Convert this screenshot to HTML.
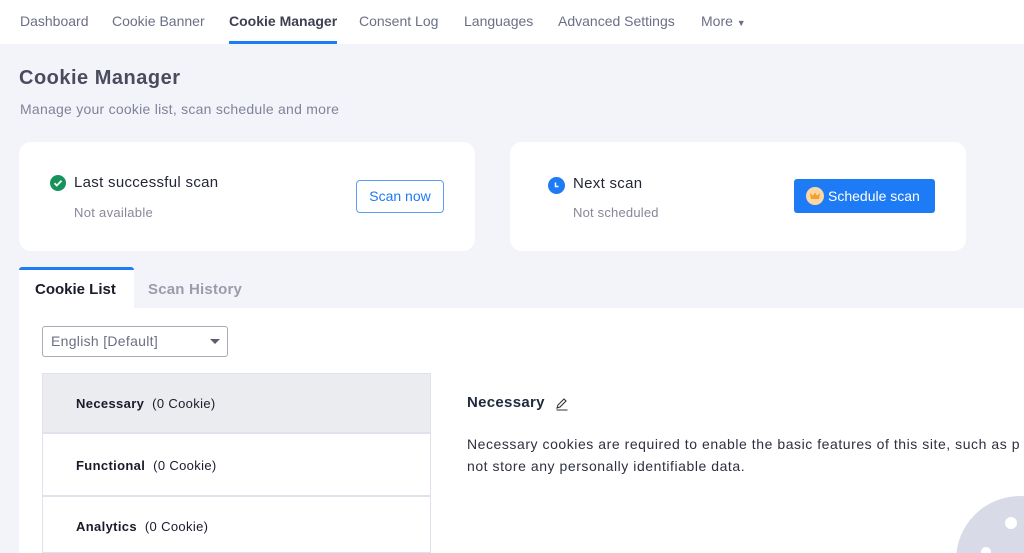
<!DOCTYPE html>
<html><head><meta charset="utf-8"><style>
*{box-sizing:border-box;margin:0;padding:0}
body{width:1024px;height:553px;overflow:hidden;background:#f3f4f9;font-family:"Liberation Sans",sans-serif;position:relative}
.nav{position:absolute;left:0;top:0;width:1024px;height:44px;background:#fff}
.nav span{position:absolute;top:13px;font-size:14px;color:#6b6f86}
.nav .act{color:#3d3f53;font-weight:bold}
.ul{position:absolute;left:229px;top:41px;width:108px;height:3px;background:#1d7bf5}
.a{position:absolute;white-space:nowrap}
.card{position:absolute;top:142px;height:109px;background:#fff;border-radius:12px}
.panel{position:absolute;left:19px;top:308px;width:1005px;height:245px;background:#fff}
</style></head><body>
<div class="nav">
<span style="left:20px">Dashboard</span>
<span style="left:112px">Cookie Banner</span>
<span class="act" style="left:229px">Cookie Manager</span>
<span style="left:359px">Consent Log</span>
<span style="left:464px">Languages</span>
<span style="left:558px">Advanced Settings</span>
<span style="left:701px">More <span style="position:static;font-size:9px">▼</span></span>
<div class="ul"></div>
</div>
<div class="a" style="left:19px;top:67px;font-size:20px;font-weight:bold;color:#4a4b5e;letter-spacing:0.5px">Cookie Manager</div>
<div class="a" style="left:20px;top:101px;font-size:14px;color:#80829a;letter-spacing:0.25px">Manage your cookie list, scan schedule and more</div>

<div class="card" style="left:19px;width:456px"></div>
<svg class="a" style="left:50px;top:175px" width="16" height="16"><circle cx="8" cy="8" r="8" fill="#15935a"/><path d="M4.5 8.2l2.3 2.3 4.7-4.8" stroke="#fff" stroke-width="1.8" fill="none"/></svg>
<div class="a" style="left:74px;top:174px;font-size:15px;color:#24263a;letter-spacing:0.3px">Last successful scan</div>
<div class="a" style="left:74px;top:205px;font-size:13px;color:#868899;letter-spacing:0.3px">Not available</div>
<div class="a" style="left:356px;top:180px;width:88px;height:33px;border:1px solid #5b9cf6;border-radius:4px;color:#1d7bf5;font-size:14px;text-align:center;line-height:31px">Scan now</div>

<div class="card" style="left:510px;width:456px"></div>
<svg class="a" style="left:548px;top:177px" width="17" height="17"><circle cx="8.5" cy="8.5" r="8.5" fill="#1d7bf5"/><path d="M7.5 5.5v4h3" stroke="#fff" stroke-width="1.5" fill="none"/></svg>
<div class="a" style="left:573px;top:175px;font-size:15px;color:#24263a;letter-spacing:0.3px">Next scan</div>
<div class="a" style="left:573px;top:205px;font-size:13px;color:#868899;letter-spacing:0.2px">Not scheduled</div>
<div class="a" style="left:794px;top:179px;width:141px;height:34px;background:#1d7bf5;border-radius:3px;color:#fff;font-size:14px;line-height:34px;padding-left:34px">Schedule scan</div>
<svg class="a" style="left:806px;top:187px" width="18" height="18"><circle cx="9" cy="9" r="9" fill="#fbd7a6"/><path d="M5 12h8l1-6-3 2.5-2-3-2 3-3-2.5z" fill="#f5a02c"/></svg>

<div class="panel"></div>
<div class="a" style="left:19px;top:267px;width:115px;height:42px;background:#fff;border-top:3px solid #1d7bf5;border-radius:3px 3px 0 0"></div>
<div class="a" style="left:35px;top:281px;font-size:15px;font-weight:bold;color:#1a1b2a">Cookie List</div>
<div class="a" style="left:148px;top:281px;font-size:15px;font-weight:bold;color:#9a9cab;letter-spacing:0.2px">Scan History</div>
<div class="a" style="left:42px;top:326px;width:186px;height:31px;border:1px solid #a8abb8;border-radius:3px;font-size:14px;color:#6b6f86;padding:6px 8px;letter-spacing:0.3px">English [Default]</div>
<div class="a" style="left:210px;top:339px;width:0;height:0;border-left:5px solid transparent;border-right:5px solid transparent;border-top:5px solid #5a5d70"></div>

<div class="a" style="left:42px;top:373px;width:389px;height:180px;border:1px solid #dfe2ea;background:#fff"></div>
<div class="a" style="left:43px;top:374px;width:387px;height:60px;background:#ebecef;border-bottom:2px solid #dfe2ea"></div>
<div class="a" style="left:43px;top:495px;width:387px;height:2px;background:#dfe2ea"></div>
<div class="a" style="left:76px;top:396px;font-size:13px;color:#1a1b2a;letter-spacing:0.35px"><b>Necessary</b>&nbsp; (0 Cookie)</div>
<div class="a" style="left:76px;top:458px;font-size:13px;color:#1a1b2a;letter-spacing:0.35px"><b>Functional</b>&nbsp; (0 Cookie)</div>
<div class="a" style="left:76px;top:519px;font-size:13px;color:#1a1b2a;letter-spacing:0.35px"><b>Analytics</b>&nbsp; (0 Cookie)</div>

<div class="a" style="left:467px;top:394px;font-size:15px;font-weight:bold;color:#1f2a3c;letter-spacing:0.3px">Necessary</div>
<svg class="a" style="left:555px;top:397px" width="14" height="14"><path d="M2 11l1-3 6-6 2 2-6 6zM1.5 13h11" stroke="#333" stroke-width="1.1" fill="none"/></svg>
<div class="a" style="left:467px;top:433px;font-size:14px;color:#2e3040;line-height:22px;letter-spacing:0.55px">Necessary cookies are required to enable the basic features of this site, such as p<br>not store any personally identifiable data.</div>

<svg class="a" style="left:950px;top:495px" width="74" height="58"><circle cx="70" cy="65" r="64" fill="#d8dae8"/><circle cx="61" cy="28" r="6" fill="#fff"/><circle cx="36" cy="57" r="5" fill="#fff"/></svg>
</body></html>
